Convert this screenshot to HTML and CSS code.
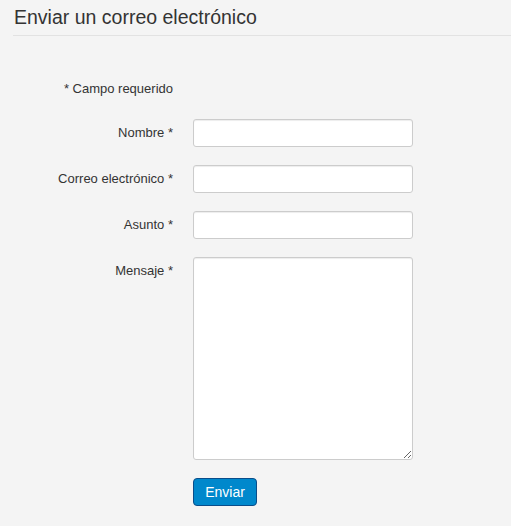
FILE: index.html
```html
<!DOCTYPE html>
<html lang="es">
<head>
<meta charset="utf-8">
<title>Enviar un correo electrónico</title>
<link rel="stylesheet" href="styles.css">
</head>
<body>
<div class="page">
  <h2 class="title">Enviar un correo electrónico</h2>
  <form class="form">
    <div class="group note-row">
      <div class="label">* Campo requerido</div>
    </div>
    <div class="group">
      <label class="label" for="n">Nombre *</label>
      <div class="controls"><input id="n" class="input" type="text"></div>
    </div>
    <div class="group">
      <label class="label" for="e">Correo electrónico *</label>
      <div class="controls"><input id="e" class="input" type="text"></div>
    </div>
    <div class="group">
      <label class="label" for="a">Asunto *</label>
      <div class="controls"><input id="a" class="input" type="text"></div>
    </div>
    <div class="group">
      <label class="label" for="m">Mensaje *</label>
      <div class="controls"><textarea id="m" class="area"></textarea></div>
    </div>
    <div class="group actions">
      <div class="controls"><button type="button" class="btn">Enviar</button></div>
    </div>
  </form>
</div>
</body>
</html>
```
FILE: styles.css
```css
html, body {
  margin: 0;
  padding: 0;
  background: #f4f4f4;
}
body {
  font-family: "Liberation Sans", Arial, sans-serif;
  font-size: 13px;
  line-height: 18px;
  color: #333;
}
.page {
  padding: 0 0 0 13px;
}
.title {
  margin: 0;
  padding: 6px 0 7px 1px;
  font-size: 19.5px;
  line-height: 22px;
  font-weight: normal;
  color: #333;
  border-bottom: 1px solid #e2e2e2;
}
.form {
  padding-top: 44px;
}
.group {
  display: flex;
  align-items: flex-start;
  margin-bottom: 18px;
}
.note-row {
  margin-bottom: 21px;
}
.label {
  width: 160px;
  flex: none;
  text-align: right;
  padding-top: 5px;
  color: #333;
}
.note-row .label {
  padding-top: 0;
}
.controls {
  margin-left: 20px;
}
.actions .controls {
  margin-left: 180px;
}
.input, .area {
  box-sizing: border-box;
  display: block;
  width: 220px;
  height: 28px;
  margin: 0;
  padding: 4px 6px;
  font: inherit;
  background: #fff;
  border: 1px solid #ccc;
  border-radius: 3px;
  box-shadow: inset 0 1px 1px rgba(0,0,0,0.075);
}
.area {
  height: 203px;
  resize: vertical;
}
.btn {
  display: block;
  box-sizing: border-box;
  width: 64px;
  height: 28px;
  margin: 0;
  padding: 0;
  font-family: inherit;
  font-size: 14px;
  color: #fff;
  background: #0088cc;
  border: 1px solid #0a4d8a;
  border-radius: 4px;
  cursor: pointer;
}
```
